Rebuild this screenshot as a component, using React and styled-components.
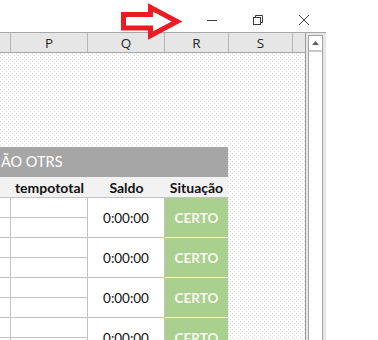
import React from 'react';
import styled, { createGlobalStyle } from 'styled-components';

const GlobalStyle = createGlobalStyle`
  html, body { margin: 0; padding: 0; background: #fff; }
  body { overflow: hidden; }
  #root { width: 378px; height: 340px; }
`;

const Window = styled.div`
  position: relative;
  width: 378px;
  height: 340px;
  overflow: hidden;
  background: #fff;
  display: flex;
  flex-direction: column;
`;

const TitleBar = styled.div`
  height: 32px;
  flex: none;
  display: flex;
  justify-content: flex-end;
  padding-right: 51px;
`;

const CaptionButton = styled.div`
  width: 46px;
  height: 32px;
  box-sizing: border-box;
  padding-top: 15px;
  display: flex;
  justify-content: center;
  align-items: flex-start;
  color: #3a3a3a;
  svg { display: block; }
`;

const ArrowOverlay = styled.svg`
  position: absolute;
  left: 116px;
  top: 0;
  width: 72px;
  height: 44px;
  pointer-events: none;
`;

const Frame = styled.div`
  flex: 1;
  min-height: 0;
  width: 326px;
  display: flex;
  border-top: 1px solid #a8a8a8;
  background: #e6e6e6;
`;

const Sheet = styled.div`
  width: 306px;
  box-sizing: border-box;
  border-right: 1px solid #9c9c9c;
  display: flex;
  flex-direction: column;
  min-height: 0;
`;

const ColHeader = styled.div`
  height: 20px;
  flex: none;
  box-sizing: border-box;
  display: flex;
  border-bottom: 1px solid #a8a8a8;
  background: #e6e6e6;
`;

const ColLabel = styled.div`
  width: ${(p) => p.$w}px;
  flex: ${(p) => (p.$w ? 'none' : '1')};
  box-sizing: border-box;
  border-right: ${(p) => (p.$w ? '1px solid #b6b6b6' : 'none')};
  display: flex;
  align-items: center;
  justify-content: center;
  font-family: 'Open Sans', 'Noto Sans', sans-serif;
  font-size: 13.5px;
  color: #262626;
`;

const Canvas = styled.div`
  flex: 1;
  min-height: 0;
  padding-top: 94px;
  background-color: #ffffff;
  background-image:
    conic-gradient(from 0deg at 1px 1px, transparent 0deg 270deg, #d9d9dc 270deg 360deg),
    conic-gradient(from 0deg at 1px 1px, transparent 0deg 270deg, #d9d9dc 270deg 360deg);
  background-size: 4px 4px, 4px 4px;
  background-position: 0 0, 2px 2px;
  overflow: hidden;
`;

const Table = styled.div`
  width: 228px;
  font-family: Lato, 'Open Sans', sans-serif;
`;

const TitleBand = styled.div`
  height: 30px;
  background: #a6a6a6;
  color: #ffffff;
  font-size: 14.5px;
  line-height: 30px;
  padding-left: 1px;
  white-space: nowrap;
`;

const HeadRow = styled.div`
  height: 21px;
  box-sizing: border-box;
  display: flex;
  background: #f2f2f2;
  border-bottom: 1px solid #c2c2c2;
`;

const HeadCell = styled.div`
  width: ${(p) => p.$w}px;
  display: flex;
  align-items: center;
  justify-content: center;
  font-weight: 700;
  font-size: 14px;
  color: #111;
`;

const Group = styled.div`
  height: 40px;
  display: flex;
  background: #fff;
`;

const SplitCol = styled.div`
  width: ${(p) => p.$w}px;
  box-sizing: border-box;
  border-right: 1px solid #c2c2c2;
  display: flex;
  flex-direction: column;
`;

const SubCell = styled.div`
  height: 20px;
  box-sizing: border-box;
  border-bottom: 1px solid #c2c2c2;
`;

const ValueCell = styled.div`
  width: 77px;
  box-sizing: border-box;
  border-right: 1px solid #c2c2c2;
  border-bottom: 1px solid #c2c2c2;
  display: flex;
  align-items: center;
  justify-content: center;
  font-size: 13.5px;
  color: #111;
`;

const StatusCell = styled.div`
  width: 63px;
  box-sizing: border-box;
  background: #a9d08e;
  border-bottom: 1px solid #ffffff;
  display: flex;
  align-items: center;
  justify-content: center;
  font-weight: 700;
  font-size: 13.5px;
  color: #f6f8ee;
`;

const ScrollCol = styled.div`
  width: 20px;
  box-sizing: border-box;
  padding: 2px 3px 0 2px;
  display: flex;
  flex-direction: column;
`;

const ScrollTrack = styled.div`
  flex: 1;
  border: 1px solid #a3a3a3;
  border-bottom: none;
  background: #fff;
  display: flex;
  flex-direction: column;
`;

const ArrowButton = styled.div`
  height: 14px;
  flex: none;
  border-bottom: 2px solid #c9c9c9;
  display: flex;
  align-items: center;
  justify-content: center;
  svg { display: block; }
`;

const columns = [
  { w: 11, label: '' },
  { w: 77, label: 'P' },
  { w: 77, label: 'Q' },
  { w: 64, label: 'R' },
  { w: 64, label: 'S' },
  { w: 0, label: '' },
];

const rows = [0, 1, 2, 3];

export default function App() {
  return (
    <Window>
      <GlobalStyle />
      <TitleBar>
        <CaptionButton>
          <svg width="10" height="10" viewBox="0 0 10 10">
            <line x1="0" y1="5.5" x2="10" y2="5.5" stroke="currentColor" strokeWidth="1" />
          </svg>
        </CaptionButton>
        <CaptionButton>
          <svg width="10" height="10" viewBox="0 0 10 10" fill="none" stroke="currentColor" strokeWidth="1">
            <rect x="0.5" y="2.5" width="7" height="7" />
            <path d="M2.5 2.5 V0.5 H9.5 V7.5 H7.5" />
          </svg>
        </CaptionButton>
        <CaptionButton>
          <svg width="10" height="10" viewBox="0 0 10 10" stroke="currentColor" strokeWidth="1">
            <line x1="0" y1="0" x2="10" y2="10" />
            <line x1="10" y1="0" x2="0" y2="10" />
          </svg>
        </CaptionButton>
      </TitleBar>

      <Frame>
        <Sheet>
          <ColHeader>
            {columns.map((c, i) => (
              <ColLabel key={i} $w={c.w}>{c.label}</ColLabel>
            ))}
          </ColHeader>
          <Canvas>
            <Table>
              <TitleBand>ÃO OTRS</TitleBand>
              <HeadRow>
                <HeadCell $w={11} />
                <HeadCell $w={77}>tempototal</HeadCell>
                <HeadCell $w={77}>Saldo</HeadCell>
                <HeadCell $w={63}>Situação</HeadCell>
              </HeadRow>
              {rows.map((r) => (
                <Group key={r}>
                  <SplitCol $w={11}>
                    <SubCell />
                    <SubCell />
                  </SplitCol>
                  <SplitCol $w={77}>
                    <SubCell />
                    <SubCell />
                  </SplitCol>
                  <ValueCell>0:00:00</ValueCell>
                  <StatusCell>CERTO</StatusCell>
                </Group>
              ))}
            </Table>
          </Canvas>
        </Sheet>
        <ScrollCol>
          <ScrollTrack>
            <ArrowButton>
              <svg width="7" height="4" viewBox="0 0 7 4">
                <polygon points="3.5,0 7,4 0,4" fill="#606060" />
              </svg>
            </ArrowButton>
          </ScrollTrack>
        </ScrollCol>
      </Frame>

      <ArrowOverlay viewBox="116 0 72 44">
        <polygon
          points="123.5,14.5 150.5,14.5 150.5,7.5 177,21.5 150.5,35.5 150.5,28 123.5,28"
          fill="#ffffff"
          stroke="#ed1c24"
          strokeWidth="5"
          strokeLinejoin="miter"
        />
      </ArrowOverlay>
    </Window>
  );
}
